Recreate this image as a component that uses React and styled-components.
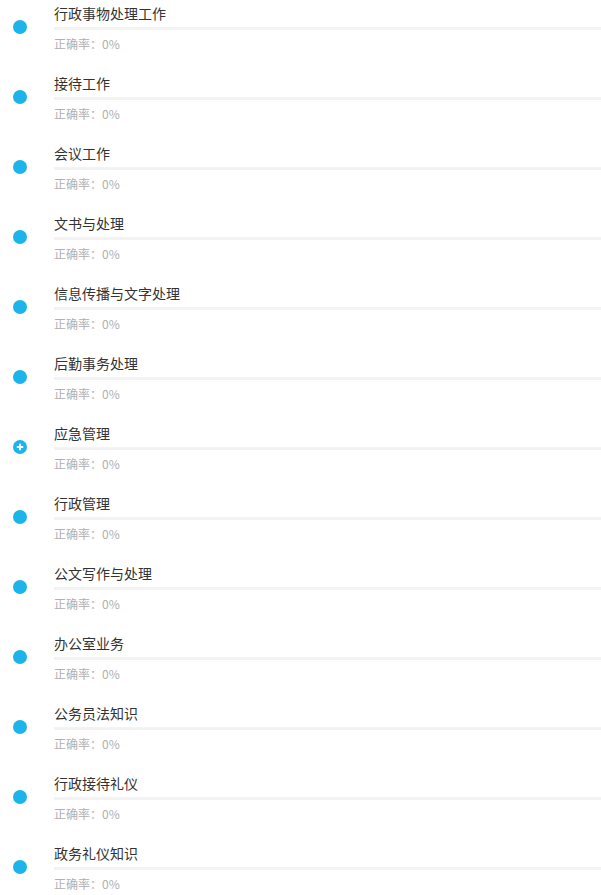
import styled, { createGlobalStyle } from "styled-components";

const Global = createGlobalStyle`
  body {
    margin: 0;
    background: #fff;
    font-family: "Noto Sans CJK SC", "Noto Sans", sans-serif;
  }
`;

const List = styled.div`
  display: flex;
  flex-direction: column;
`;

const Row = styled.div`
  display: flex;
  height: 70px;
`;

const Marker = styled.div`
  width: 54px;
  flex: none;
  display: flex;
  justify-content: flex-start;
  padding: 20px 0 0 13px;
  box-sizing: border-box;
`;

const Dot = styled.span`
  width: 14px;
  height: 14px;
  border-radius: 50%;
  background: #1db4ea;
`;

const Body = styled.div`
  flex: 1;
  display: flex;
  flex-direction: column;
`;

const Title = styled.div`
  height: 26px;
  line-height: 26px;
  font-size: 14px;
  color: #333;
`;

const Bar = styled.div`
  height: 3px;
  margin-top: 1px;
  background: #f3f3f3;
`;

const Rate = styled.div`
  height: 28px;
  line-height: 28px;
  font-size: 12px;
  color: #b0b0b0;
`;

const PlusIcon = () => (
  <svg width="14" height="14" viewBox="0 0 14 14">
    <circle cx="7" cy="7" r="7" fill="#1db4ea" />
    <path d="M3.8 7h6.4M7 3.8v6.4" stroke="#fff" strokeWidth="1.8" />
  </svg>
);

const items = [
  "行政事物处理工作",
  "接待工作",
  "会议工作",
  "文书与处理",
  "信息传播与文字处理",
  "后勤事务处理",
  "应急管理",
  "行政管理",
  "公文写作与处理",
  "办公室业务",
  "公务员法知识",
  "行政接待礼仪",
  "政务礼仪知识",
];

export default function App() {
  return (
    <>
      <Global />
      <List>
        {items.map((name) => (
          <Row key={name}>
            <Marker>{name === "应急管理" ? <PlusIcon /> : <Dot />}</Marker>
            <Body>
              <Title>{name}</Title>
              <Bar />
              <Rate>正确率：0%</Rate>
            </Body>
          </Row>
        ))}
      </List>
    </>
  );
}
